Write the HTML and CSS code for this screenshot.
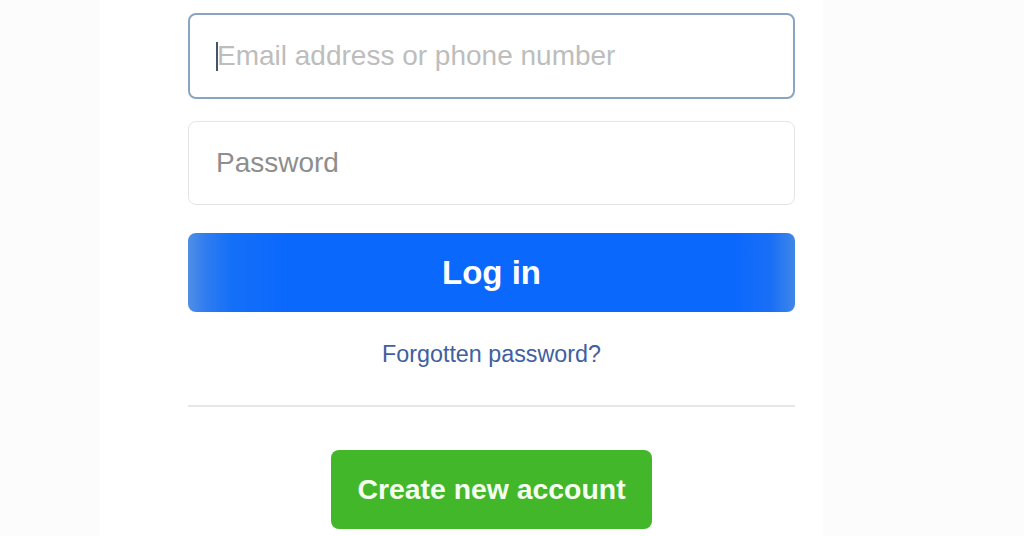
FILE: index.html
```html
<!DOCTYPE html>
<html lang="en">
<head>
<meta charset="utf-8">
<title>Log in</title>
<link rel="stylesheet" href="styles.css">
</head>
<body>
<div class="page">
  <main class="card">
    <form class="login-form">
      <div class="field field-focus">
        <span class="caret"></span>
        <span class="placeholder">Email address or phone number</span>
      </div>
      <div class="field">
        <span class="placeholder placeholder-dark">Password</span>
      </div>
      <button type="button" class="btn-login">Log in</button>
      <a class="forgot" href="#">Forgotten password?</a>
      <hr class="divider">
      <div class="create-row">
        <button type="button" class="btn-create">Create new account</button>
      </div>
    </form>
  </main>
</div>
</body>
</html>
```

FILE: styles.css
```css
* { box-sizing: border-box; }

html, body {
  margin: 0;
  padding: 0;
  height: 100%;
}

body {
  background: #fcfcfc;
  font-family: "Liberation Sans", Arial, Helvetica, sans-serif;
  overflow: hidden;
}

.page {
  display: flex;
  height: 536px;
  padding-left: 100px;
}

.card {
  width: 723px;
  height: 100%;
  background: #ffffff;
  padding: 13px 28px 0 88px;
}

.login-form {
  display: flex;
  flex-direction: column;
}

.field {
  display: flex;
  align-items: center;
  height: 84px;
  border: 1px solid #e3e4e6;
  border-radius: 8px;
  padding-left: 27px;
  background: #fff;
  margin-bottom: 28px;
}

.field-focus {
  height: 86px;
  border: 2px solid #8aa5c2;
  margin-bottom: 22px;
  padding-left: 26px;
}

.caret {
  width: 2px;
  height: 29px;
  background: #45546a;
  margin-right: -1px;
}

.placeholder {
  font-size: 28px;
  color: #bdbdbd;
}

.placeholder-dark {
  color: #8e8e8e;
}

.btn-login {
  height: 79px;
  border: none;
  border-radius: 8px;
  background: linear-gradient(to right, #4f8fe4 0%, #2f7cf0 3%, #1570f8 7%, #0b68fd 16%, #0b68fd 90%, #1a6ff6 96%, #3f86e8 100%);
  color: #ffffff;
  font-family: "Liberation Sans", Arial, Helvetica, sans-serif;
  font-weight: bold;
  font-size: 33px;
  padding: 0;
  cursor: pointer;
}

.forgot {
  align-self: center;
  margin-top: 29px;
  font-size: 23.3px;
  line-height: 26px;
  color: #40609f;
  text-decoration: none;
}

.divider {
  width: 100%;
  margin: 38px 0 0 0;
  border: none;
  border-top: 2px solid #e6e7ea;
}

.create-row {
  display: flex;
  justify-content: center;
  margin-top: 43px;
}

.btn-create {
  width: 321px;
  height: 79px;
  border: none;
  border-radius: 8px;
  background: #42b72a;
  color: #f4fff0;
  font-family: "Liberation Sans", Arial, Helvetica, sans-serif;
  font-weight: bold;
  font-size: 28.4px;
  padding: 0;
  cursor: pointer;
}
```
